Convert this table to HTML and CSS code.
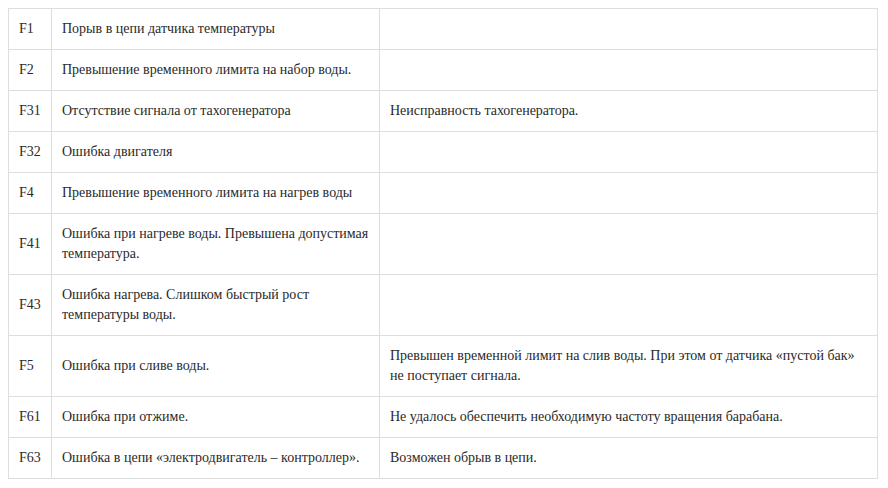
FILE: index.html
```html
<!DOCTYPE html>
<html lang="ru">
<head>
<meta charset="utf-8">
<link rel="stylesheet" href="styles.css">
</head>
<body>
<table class="codes">
  <colgroup>
    <col class="c-code">
    <col class="c-name">
    <col class="c-desc">
  </colgroup>
  <tbody>
    <tr class="r1"><td>F1</td><td>Порыв в цепи датчика температуры</td><td></td></tr>
    <tr class="r1"><td>F2</td><td>Превышение временного лимита на набор воды.</td><td></td></tr>
    <tr class="r1"><td>F31</td><td>Отсутствие сигнала от тахогенератора</td><td>Неисправность тахогенератора.</td></tr>
    <tr class="r1"><td>F32</td><td>Ошибка двигателя</td><td></td></tr>
    <tr class="r1"><td>F4</td><td>Превышение временного лимита на нагрев воды</td><td></td></tr>
    <tr class="r2"><td>F41</td><td>Ошибка при нагреве воды. Превышена допустимая температура.</td><td></td></tr>
    <tr class="r2"><td>F43</td><td>Ошибка нагрева. Слишком быстрый рост температуры воды.</td><td></td></tr>
    <tr class="r2"><td>F5</td><td>Ошибка при сливе воды.</td><td>Превышен временной лимит на слив воды. При этом от датчика «пустой бак» не поступает сигнала.</td></tr>
    <tr class="r1"><td>F61</td><td>Ошибка при отжиме.</td><td>Не удалось обеспечить необходимую частоту вращения барабана.</td></tr>
    <tr class="r1"><td>F63</td><td>Ошибка в цепи «электродвигатель – контроллер».</td><td>Возможен обрыв в цепи.</td></tr>
  </tbody>
</table>
</body>
</html>
```
FILE: styles.css
```css
html, body {
  margin: 0;
  padding: 0;
  background: #ffffff;
}
body {
  padding: 8px 0 0 8px;
}
.codes {
  border-collapse: collapse;
  table-layout: fixed;
  width: 869px;
}
.c-code { width: 43px; }
.c-name { width: 328px; }
.c-desc { width: 498px; }
.codes td {
  font-family: "Liberation Serif", "Times New Roman", serif;
  font-size: 14px;
  color: #2a2a2a;
  border: 1px solid #dedede;
  padding: 10px 6px 10px 10px;
  line-height: 20px;
  vertical-align: middle;
}
.r1 td { height: 20px; }
.r2 td { height: 40px; }
```
